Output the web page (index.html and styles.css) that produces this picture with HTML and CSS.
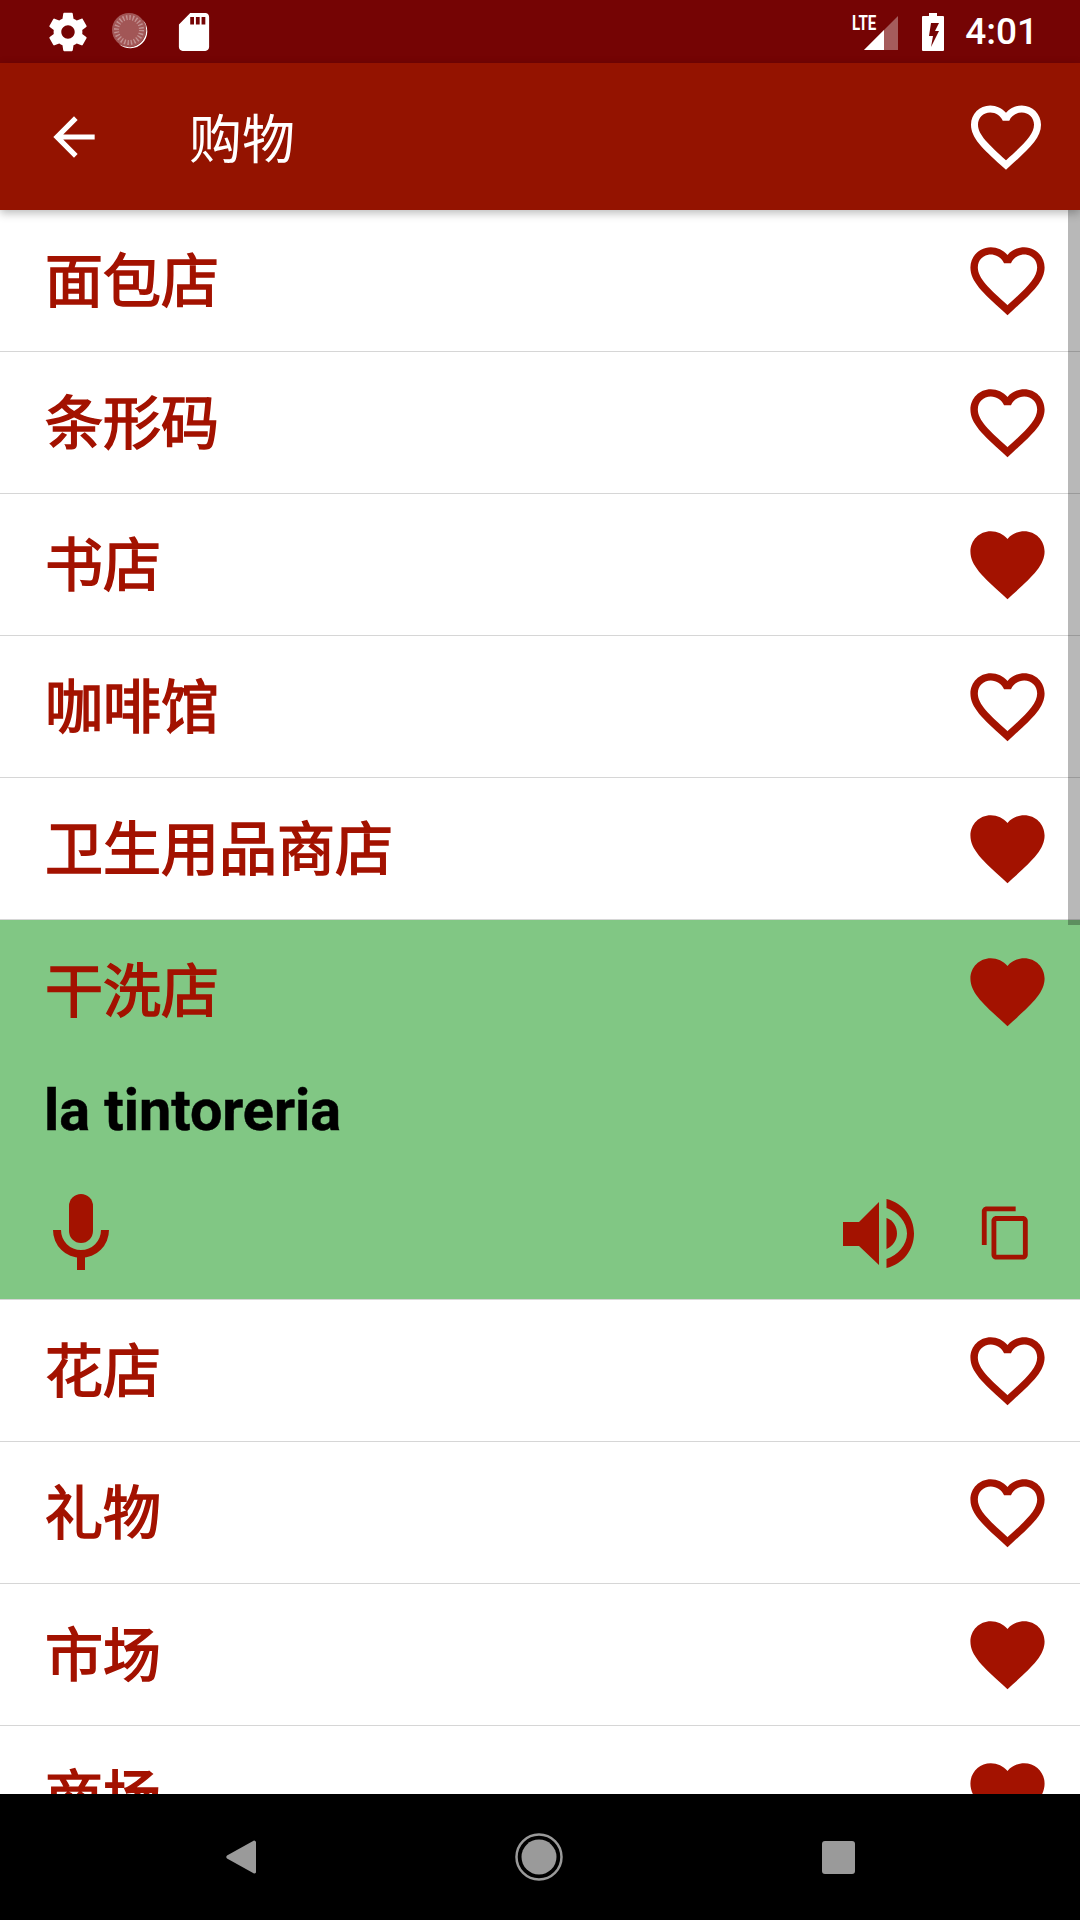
FILE: index.html
```html
<!DOCTYPE html>
<html lang="zh-CN">
<head>
<meta charset="utf-8">
<title>购物</title>
<link rel="stylesheet" href="styles.css">
</head>
<body>
<svg class="sprite" width="0" height="0" aria-hidden="true">
  <defs>
    <symbol id="heart-o" viewBox="0 0 24 24"><path d="M16.5 3c-1.74 0-3.41.81-4.5 2.09C10.91 3.81 9.24 3 7.5 3 4.42 3 2 5.42 2 8.5c0 3.78 3.4 6.86 8.55 11.54L12 21.35l1.45-1.32C18.6 15.36 22 12.28 22 8.5 22 5.42 19.58 3 16.5 3zm-4.4 15.55l-.1.1-.1-.1C7.14 14.24 4 11.39 4 8.5 4 6.5 5.5 5 7.5 5c1.54 0 3.04.99 3.57 2.36h1.87C13.46 5.99 14.96 5 16.5 5c2 0 3.5 1.5 3.5 3.5 0 2.89-3.14 5.74-7.9 10.05z"/></symbol>
    <symbol id="heart-f" viewBox="0 0 24 24"><path d="M12 21.35l-1.45-1.32C5.4 15.36 2 12.28 2 8.5 2 5.42 4.42 3 7.5 3c1.74 0 3.41.81 4.5 2.09C13.09 3.81 14.76 3 16.5 3 19.58 3 22 5.42 22 8.5c0 3.78-3.4 6.86-8.55 11.54L12 21.35z"/></symbol>
  </defs>
</svg>
<div class="screen">
  <header class="status">
    <svg class="st-gear" viewBox="0 0 24 24"><path d="M19.43 12.98c.04-.32.07-.64.07-.98s-.03-.66-.07-.98l2.11-1.65c.19-.15.24-.42.12-.64l-2-3.46c-.12-.22-.39-.3-.61-.22l-2.49 1c-.52-.4-1.08-.73-1.69-.98l-.38-2.65C14.46 2.18 14.25 2 14 2h-4c-.25 0-.46.18-.49.42l-.38 2.65c-.61.25-1.17.59-1.69.98l-2.49-1c-.23-.09-.49 0-.61.22l-2 3.46c-.13.22-.07.49.12.64l2.11 1.65c-.04.32-.07.65-.07.98s.03.66.07.98l-2.11 1.65c-.19.15-.24.42-.12.64l2 3.46c.12.22.39.3.61.22l2.49-1c.52.4 1.08.73 1.69.98l.38 2.65c.03.24.24.42.49.42h4c.25 0 .46-.18.49-.42l.38-2.65c.61-.25 1.17-.59 1.69-.98l2.49 1c.23.09.49 0 .61-.22l2-3.46c.12-.22.07-.49-.12-.64l-2.11-1.65zM12 15.5c-1.93 0-3.5-1.57-3.5-3.5s1.57-3.5 3.5-3.5 3.5 1.57 3.5 3.5-1.57 3.5-3.5 3.5z"/></svg>
    <svg class="st-sync" viewBox="0 0 38 38">
      <circle cx="17" cy="17" r="17" fill="#fff" fill-opacity=".33"/>
      <path d="M31 7A17 17 0 0 1 7 31 17.200 17.200 0 0 0 31 7Z" fill="#fff"/>
      <circle cx="17" cy="17" r="12.500" fill="none" stroke="#fff" stroke-opacity=".35" stroke-width="5" stroke-dasharray="1.400 1.872"/>
    </svg>
    <svg class="st-sd" viewBox="3 1 18 22"><path d="M18 2h-8L4.02 8 4 20c0 1.1.9 2 2 2h12c1.1 0 2-.9 2-2V4c0-1.1-.9-2-2-2zm-6 6h-2V4h2v4zm3 0h-2V4h2v4zm3 0h-2V4h2v4z"/></svg>
    <div class="st-right">
      <div class="st-net">
        <span class="st-lte">LTE</span>
        <svg class="st-signal" viewBox="0 0 36 36"><path d="M35 1v34H1Z" fill="#fff" fill-opacity=".35"/><path d="M21 15v20H1Z"/></svg>
      </div>
      <svg class="st-batt" viewBox="0 0 22 38"><path fill-rule="evenodd" d="M7 0h8v3h6a1 1 0 0 1 1 1v33a1 1 0 0 1-1 1H1a1 1 0 0 1-1-1V4a1 1 0 0 1 1-1h6ZM9 10H17L13 18H17L9 34 11 23H7Z"/></svg>
      <span class="st-time">4:01</span>
    </div>
  </header>

  <div class="appbar">
    <svg class="ab-back" viewBox="0 0 24 24"><path d="M20 11H7.83l5.59-5.59L12 4l-8 8 8 8 1.41-1.41L7.83 13H20v-2z"/></svg>
    <h1 class="ab-title">购物</h1>
    <svg class="ab-heart"><use href="#heart-o"/></svg>
  </div>

  <main class="list">
    <div class="row"><span class="term">面包店</span><svg class="heart"><use href="#heart-o"/></svg></div>
    <div class="row"><span class="term">条形码</span><svg class="heart"><use href="#heart-o"/></svg></div>
    <div class="row"><span class="term">书店</span><svg class="heart"><use href="#heart-f"/></svg></div>
    <div class="row"><span class="term">咖啡馆</span><svg class="heart"><use href="#heart-o"/></svg></div>
    <div class="row"><span class="term">卫生用品商店</span><svg class="heart"><use href="#heart-f"/></svg></div>
    <section class="open">
      <div class="open-head"><span class="term">干洗店</span><svg class="heart"><use href="#heart-f"/></svg></div>
      <div class="translation">la tintoreria</div>
      <div class="actions">
        <svg class="ac-mic" viewBox="0 1 62 82">
          <rect x="19" y="3" width="24" height="49" rx="12"/>
          <path d="M3 39A28 28 0 0 0 59 39H51A20 20 0 0 1 11 39Z"/>
          <rect x="27" y="65" width="8" height="14"/>
        </svg>
        <svg class="ac-speaker" viewBox="0 0 78 77">
          <path d="M3 27H19L39 7V70L19 51H3Z"/>
          <path d="M46.500 23C53 25 57 32 57 38.500 57 45 53 51 46.500 54Z"/>
          <path d="M46.500 4C63 8 74 22 74 38.500 74 55 63 69 46.500 73V64C58 60 67 50 67 38.500 67 27 58 17 46.500 13Z"/>
        </svg>
        <svg class="ac-copy" viewBox="0 0 24 24"><path d="M16 1H4c-1.100 0-2 .9-2 2v14h2V3h12V1zm3 4H8c-1.100 0-2 .9-2 2v14c0 1.100.9 2 2 2h11c1.100 0 2-.9 2-2V7c0-1.100-.9-2-2-2zm0 16H8V7h11v14z"/></svg>
      </div>
    </section>
    <div class="row"><span class="term">花店</span><svg class="heart"><use href="#heart-o"/></svg></div>
    <div class="row"><span class="term">礼物</span><svg class="heart"><use href="#heart-o"/></svg></div>
    <div class="row"><span class="term">市场</span><svg class="heart"><use href="#heart-f"/></svg></div>
    <div class="row"><span class="term">商场</span><svg class="heart"><use href="#heart-f"/></svg></div>
    <div class="scrollbar"></div>
  </main>

  <nav class="navbar">
    <svg class="nv-back" viewBox="0 0 32 36"><path d="M29 1.500 2 16.500a2 2 0 0 0 0 3L29 34.500a2 2 0 0 0 2-1V3a2 2 0 0 0-2-1.500Z"/></svg>
    <svg class="nv-home" viewBox="0 0 48 48"><circle cx="24" cy="24" r="22.500" fill="none" stroke="#9a9a9a" stroke-width="2.500"/><circle cx="24" cy="24" r="17.500"/></svg>
    <div class="nv-recent"></div>
  </nav>
</div>
</body>
</html>
```

FILE: styles.css
```css
* { box-sizing: border-box; }
html, body { margin: 0; padding: 0; }
body { font-family: "Noto Sans CJK SC", "Noto Sans", sans-serif; background: #fff; }
.sprite { display: block; height: 0; }

.screen { width: 1080px; height: 1920px; display: flex; flex-direction: column; overflow: hidden; }

/* status bar */
.status { height: 63px; flex: none; background: #750404; display: flex; align-items: center; fill: #fff; color: #fff; padding-left: 45px; }
.st-gear { width: 46px; height: 46px; }
.st-sync { width: 38px; height: 38px; margin-left: 21px; }
.st-sd { width: 34px; height: 42px; margin-left: 27px; }
.st-right { margin-left: auto; display: flex; align-items: center; padding-right: 42px; }
.st-net { width: 46px; height: 38px; display: flex; justify-content: flex-end; align-items: flex-end; position: relative; }
.st-lte { position: absolute; left: -1px; top: 0; font: 700 21px/21px "Roboto", sans-serif; transform: scaleX(.72); transform-origin: left top; }
.st-signal { width: 36px; height: 36px; }
.st-batt { width: 22px; height: 38px; margin-left: 23px; }
.st-time { font: 500 37px/42px "Roboto", sans-serif; margin-left: 21px; }

/* app bar */
.appbar { height: 147px; flex: none; background: #941300; display: flex; align-items: center; fill: #fff; padding: 0 32px 0 43px; position: relative; z-index: 2; box-shadow: 0 3px 9px rgba(0,0,0,.28); }
.ab-back { width: 62px; height: 62px; }
.ab-title { margin: 0 0 2px 84px; font-size: 53px; font-weight: 400; color: #fff; }
.ab-heart { width: 84px; height: 84px; margin-left: auto; }

/* list */
.list { flex: 1; min-height: 0; overflow: hidden; position: relative; fill: #a31200; }
.row, .open-head { height: 142px; display: flex; align-items: center; justify-content: space-between; padding: 0 28px 0 45px; }
.row { border-bottom: 1px solid #d6d6d6; background: #fff; }
.term { font-size: 58px; font-weight: 400; color: #a31200; line-height: 1.2; -webkit-text-stroke: 1.6px #a31200; position: relative; top: -3px; }
.heart { width: 89px; height: 89px; flex: none; }

.open { background: #81c784; border-bottom: 1px solid #d6d6d6; height: 380px; }
.translation { height: 96px; padding-left: 44px; font: 700 57.500px/98px "Roboto", sans-serif; color: #000; -webkit-text-stroke: .5px #000; }
.actions { display: flex; align-items: center; padding: 34px 45px 0 50px; }
.ac-mic { width: 62px; height: 82px; margin-right: auto; }
.ac-speaker { width: 78px; height: 77px; }
.ac-copy { width: 58px; height: 58px; margin-left: 59px; }

.scrollbar { position: absolute; top: 0; right: 0; width: 12px; height: 715px; background: rgba(0,0,0,.28); }

/* navigation bar */
.navbar { height: 126px; flex: none; background: #000; display: flex; align-items: center; fill: #9a9a9a; padding-left: 225px; }
.nv-back { width: 32px; height: 36px; }
.nv-home { width: 48px; height: 48px; margin-left: 258px; }
.nv-recent { width: 33px; height: 33px; margin-left: 259px; background: #9a9a9a; border-radius: 3px; }
```
